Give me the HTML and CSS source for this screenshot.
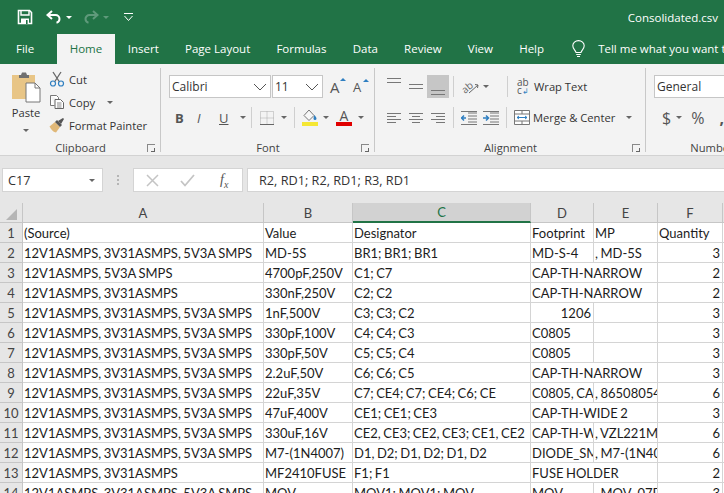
FILE: index.html

```html
<!DOCTYPE html>
<html lang="en">
<head>
    <meta charset="UTF-8">
    <meta name="viewport" content="width=device-width, initial-scale=1.0">
    <title>Consolidated.csv</title>
    <link rel="stylesheet" href="styles.css">
</head>
<body>
    <header class="titlebar">
        <div class="qat">
            <svg class="qat-save" width="16" height="16" viewBox="0 0 16 16"><path d="M1.5 1.5h11l2 2v11h-13z" fill="none" stroke="#fff" stroke-width="1.6"/><path d="M4 2v4h8V2" fill="none" stroke="#fff" stroke-width="1.4"/><path d="M4 9.5h8V15H4z" fill="#fff"/><path d="M9 11h1.6v4H9z" fill="#217346"/></svg>
            <svg class="qat-undo" width="16" height="14" viewBox="0 0 16 14"><path d="M6 1 1.5 5 6 9M2 5h7.5a4 4 0 0 1 4 4 4 4 0 0 1-3 3.7" fill="none" stroke="#fff" stroke-width="2"/></svg>
            <span class="arrow white"></span>
            <svg class="qat-redo" width="16" height="14" viewBox="0 0 16 14"><path d="M10 1l4.5 4L10 9M14 5H6.5a4 4 0 0 0-4 4 4 4 0 0 0 3 3.7" fill="none" stroke="#5f9a7b" stroke-width="2"/></svg>
            <span class="arrow dim"></span>
            <svg class="qat-more" width="9" height="8" viewBox="0 0 9 8"><path d="M0 .5h9" stroke="#fff"/><path d="M.5 3l4 4.5 4-4.5" fill="none" stroke="#fff"/></svg>
        </div>
        <div class="doc-title">Consolidated.csv</div>
    </header>

    <nav class="tabs">
        <a class="tab file">File</a>
        <a class="tab active">Home</a>
        <a class="tab">Insert</a>
        <a class="tab">Page Layout</a>
        <a class="tab">Formulas</a>
        <a class="tab">Data</a>
        <a class="tab">Review</a>
        <a class="tab">View</a>
        <a class="tab">Help</a>
        <svg class="bulb" width="13" height="18" viewBox="0 0 13 18"><path d="M4 12.5C3.5 10 .8 9 .8 5.8a5.7 5.2 0 0 1 11.4 0C12.2 9 9.5 10 9 12.5z" fill="none" stroke="#fff" stroke-width="1.1"/><path d="M4.2 14.5h4.6M5 16.5h3" stroke="#fff" stroke-width="1.1"/></svg>
        <span class="tell">Tell me what you want to do</span>
    </nav>

    <section class="ribbon">
        <div class="group clipboard">
            <div class="group-body clip-body">
                <div class="paste">
                    <svg width="30" height="31" viewBox="0 0 30 31">
                        <path d="M1 3h23v24H1z" fill="#e8c586"/>
                        <path d="M8 3h2l1-2.5h4L16 3h2v3H8z" fill="#6f6f6f"/>
                        <path d="M15 11h9l5 5v14H15z" fill="#fff" stroke="#777"/>
                        <path d="M24 11v5h5" fill="none" stroke="#777"/>
                    </svg>
                    <span class="paste-label">Paste</span>
                    <span class="arrow"></span>
                </div>
                <div class="clip-actions">
                    <div class="clip-row">
                        <svg width="16" height="16" viewBox="0 0 16 16"><path d="M4 1l6.5 10M12 1 5.500 11" stroke="#666" stroke-width="1.3" fill="none"/><circle cx="4" cy="12.5" r="2.5" fill="none" stroke="#2f7fc1" stroke-width="1.2"/><circle cx="12" cy="12.5" r="2.5" fill="none" stroke="#2f7fc1" stroke-width="1.2"/></svg>
                        <span>Cut</span>
                    </div>
                    <div class="clip-row">
                        <svg width="16" height="16" viewBox="0 0 16 16"><path d="M1.5 1.5h6l2 2v2M1.5 1.5v10h4" fill="#fff" stroke="#777"/><path d="M6 5.5h5.5l3 3v6H6z" fill="#fff" stroke="#666"/><path d="M8 9h4.5M8 11h4.5M8 13h4.5" stroke="#888"/></svg>
                        <span>Copy</span>
                        <span class="arrow copy-arrow"></span>
                    </div>
                    <div class="clip-row">
                        <svg width="16" height="16" viewBox="0 0 16 16"><path d="M.5 9.5 6 5l5 5-4 5.5c-2 0-5-3-6.500-6z" fill="#e0b878"/><path d="M6 5l2-2 5 5-2 2z" fill="#555"/><path d="M9 4l5-3 1 1-3 5z" fill="#555"/></svg>
                        <span>Format Painter</span>
                    </div>
                </div>
            </div>
            <div class="group-label">Clipboard<i class="launcher"></i></div>
        </div>

        <div class="group font">
            <div class="group-body stack">
                <div class="tool-row font-top">
                    <div class="combo font-name"><span>Calibri</span><svg width="14" height="8" viewBox="0 0 14 8"><path d="M1 1l6 6 6-6" fill="none" stroke="#555"/></svg></div>
                    <div class="combo font-size"><span>11</span><svg width="14" height="8" viewBox="0 0 14 8"><path d="M1 1l6 6 6-6" fill="none" stroke="#555"/></svg></div>
                    <span class="grow-a">A<i></i></span>
                    <span class="grow-a small">A<i></i></span>
                </div>
                <div class="tool-row font-bottom">
                    <b class="fmt">B</b>
                    <i class="fmt">I</i>
                    <u class="fmt">U</u>
                    <span class="arrow u-arrow"></span>
                    <span class="sep u-sep"></span>
                    <svg width="14" height="14" viewBox="0 0 14 14"><path d="M.5.5h13v13H.5z" fill="none" stroke="#aaa" stroke-dasharray="1 1"/><path d="M7 .5v13M.5 7h13" stroke="#aaa" stroke-dasharray="1 1"/><path d="M0 13.5h14" stroke="#666"/></svg>
                    <span class="arrow border-arrow"></span>
                    <span class="sep border-sep"></span>
                    <svg width="16" height="17" viewBox="0 0 16 17"><path d="M7 1 2 6.5l5 5 5-5z" fill="#f7f7f7" stroke="#777"/><path d="M12.5 6c1 1.5 2 2.5 2 3.5a1 1 0 0 1-3 0c0-1 .5-2 1-3.500z" fill="#2f7fc1"/><path d="M0 13h16v4H0z" fill="#f5e733"/></svg>
                    <span class="arrow fill-arrow"></span>
                    <span class="color-a">A</span>
                    <span class="arrow color-arrow"></span>
                </div>
            </div>
            <div class="group-label">Font<i class="launcher"></i></div>
        </div>

        <div class="group alignment">
            <div class="group-body stack">
                <div class="tool-row align-top">
                    <span class="lines top"><i></i><i></i></span>
                    <span class="lines mid"><i></i><i></i></span>
                    <span class="lines bot on"><i></i><i></i></span>
                    <span class="sep align-sep"></span>
                    <svg width="19" height="16" viewBox="0 0 19 16"><text x="0" y="12" transform="rotate(-40 6 8)" class="orient-text">ab</text><path d="M8 14 17 6M14 5.500l3 .5-.5 3" fill="none" stroke="#666"/></svg>
                    <span class="arrow orient-arrow"></span>
                    <span class="sep wrap-sep"></span>
                    <span class="ab"><span>ab</span><span>c<em>&#8626;</em></span></span>
                    <span class="btn-text">Wrap Text</span>
                </div>
                <div class="tool-row align-bottom">
                    <span class="para left"><i></i><i></i><i></i><i></i></span>
                    <span class="para center"><i></i><i></i><i></i><i></i></span>
                    <span class="para right"><i></i><i></i><i></i><i></i></span>
                    <span class="sep align-sep"></span>
                    <svg width="16" height="14" viewBox="0 0 16 14"><path d="M7 2h9M7 5h9M7 8h9M7 11h9M0 13.5h16M0 .5h16" stroke="#777"/><path d="M0 7h5M3 4.5 .5 7 3 9.5" fill="none" stroke="#2f7fc1" stroke-width="1.5"/></svg>
                    <svg class="indent-more" width="16" height="14" viewBox="0 0 16 14"><path d="M7 2h9M7 5h9M7 8h9M7 11h9M0 13.5h16M0 .5h16" stroke="#777"/><path d="M0 7h5M3 4.5 5.5 7 3 9.5" fill="none" stroke="#2f7fc1" stroke-width="1.5"/></svg>
                    <span class="sep merge-sep"></span>
                    <svg width="16" height="15" viewBox="0 0 16 15"><path d="M.5.5h15v14H.5zM.5 4h15M.5 11h15M8 .5V4M8 11v3.5" fill="#fff" stroke="#777"/><path d="M3 7.5h10M5 6 3 7.5 5 9M11 6l2 1.5L11 9" fill="none" stroke="#2f7fc1"/></svg>
                    <span class="btn-text merge-text">Merge &amp; Center</span>
                    <span class="arrow merge-arrow"></span>
                </div>
            </div>
            <div class="group-label">Alignment<i class="launcher"></i></div>
        </div>

        <div class="group number">
            <div class="group-body stack">
                <div class="tool-row"><div class="combo number-format"><span>General</span></div></div>
                <div class="tool-row number-row">
                    <span class="num-sym">$</span>
                    <span class="arrow"></span>
                    <span class="num-sym pct">%</span>
                    <span class="num-sym comma">,</span>
                </div>
            </div>
            <div class="group-label">Number</div>
        </div>
    </section>

    <section class="formula-bar">
        <div class="name-box"><span>C17</span><span class="arrow"></span></div>
        <div class="dots"><i></i><i></i><i></i></div>
        <div class="fx-box">
            <svg width="13" height="13" viewBox="0 0 13 13"><path d="M1 1l11 11M12 1 1 12" stroke="#c4c4c4" stroke-width="1.5"/></svg>
            <svg width="15" height="13" viewBox="0 0 15 13"><path d="M1 7l4 4.5L14 1" fill="none" stroke="#c4c4c4" stroke-width="1.8"/></svg>
            <span class="fx">f<sub>x</sub></span>
        </div>
        <div class="formula-input">R2, RD1; R2, RD1; R3, RD1</div>
    </section>

    <main class="sheet">
        <table class="grid">
            <colgroup>
                <col class="c-head"><col class="c-a"><col class="c-b"><col class="c-c"><col class="c-d"><col class="c-e"><col class="c-f"><col class="c-g">
            </colgroup>
            <thead>
                <tr><th class="corner"><i></i></th><th>A</th><th>B</th><th class="current">C</th><th>D</th><th>E</th><th>F</th><th></th></tr>
            </thead>
            <tbody>
                <tr><th>1</th><td>(Source)</td><td>Value</td><td>Designator</td><td>Footprint</td><td>MP</td><td>Quantity</td><td></td></tr>
                <tr><th>2</th><td>12V1ASMPS, 3V31ASMPS, 5V3A SMPS</td><td>MD-5S</td><td>BR1; BR1; BR1</td><td>MD-S-4</td><td>, MD-5S</td><td class="n">3</td><td></td></tr>
                <tr><th>3</th><td>12V1ASMPS, 5V3A SMPS</td><td>4700pF,250V</td><td>C1; C7</td><td class="spill">CAP-TH-NARROW</td><td></td><td class="n">2</td><td></td></tr>
                <tr><th>4</th><td>12V1ASMPS, 3V31ASMPS</td><td>330nF,250V</td><td>C2; C2</td><td class="spill">CAP-TH-NARROW</td><td></td><td class="n">2</td><td></td></tr>
                <tr><th>5</th><td>12V1ASMPS, 3V31ASMPS, 5V3A SMPS</td><td>1nF,500V</td><td>C3; C3; C2</td><td class="n">1206</td><td></td><td class="n">3</td><td></td></tr>
                <tr><th>6</th><td>12V1ASMPS, 3V31ASMPS, 5V3A SMPS</td><td>330pF,100V</td><td>C4; C4; C3</td><td>C0805</td><td></td><td class="n">3</td><td></td></tr>
                <tr><th>7</th><td>12V1ASMPS, 3V31ASMPS, 5V3A SMPS</td><td>330pF,50V</td><td>C5; C5; C4</td><td>C0805</td><td></td><td class="n">3</td><td></td></tr>
                <tr><th>8</th><td>12V1ASMPS, 3V31ASMPS, 5V3A SMPS</td><td>2.2uF,50V</td><td>C6; C6; C5</td><td class="spill">CAP-TH-NARROW</td><td></td><td class="n">3</td><td></td></tr>
                <tr><th>9</th><td>12V1ASMPS, 3V31ASMPS, 5V3A SMPS</td><td>22uF,35V</td><td>C7; CE4; C7; CE4; C6; CE</td><td class="cut">C0805, CAP-TH</td><td class="cut">, 865080545012</td><td class="n">6</td><td></td></tr>
                <tr><th>10</th><td>12V1ASMPS, 3V31ASMPS, 5V3A SMPS</td><td>47uF,400V</td><td>CE1; CE1; CE3</td><td class="spill">CAP-TH-WIDE 2</td><td></td><td class="n">3</td><td></td></tr>
                <tr><th>11</th><td>12V1ASMPS, 3V31ASMPS, 5V3A SMPS</td><td>330uF,16V</td><td>CE2, CE3; CE2, CE3; CE1, CE2</td><td class="cut">CAP-TH-WIDE</td><td class="cut">, VZL221M1CTR</td><td class="n">6</td><td></td></tr>
                <tr><th>12</th><td>12V1ASMPS, 3V31ASMPS, 5V3A SMPS</td><td>M7-(1N4007)</td><td>D1, D2; D1, D2; D1, D2</td><td class="cut">DIODE_SMA</td><td class="cut">, M7-(1N4007)</td><td class="n">6</td><td></td></tr>
                <tr><th>13</th><td>12V1ASMPS, 3V31ASMPS</td><td>MF2410FUSE</td><td>F1; F1</td><td class="spill">FUSE HOLDER</td><td></td><td class="n">2</td><td></td></tr>
                <tr><th>14</th><td>12V1ASMPS, 3V31ASMPS, 5V3A SMPS</td><td>MOV</td><td>MOV1; MOV1; MOV</td><td>MOV</td><td class="cut">, MOV_07D471K</td><td class="n">3</td><td></td></tr>
            </tbody>
        </table>
    </main>
</body>
</html>
```

FILE: styles.css

```css
html, body {
    margin: 0;
    height: 493px;
    overflow: hidden;
}
body {
    width: 724px;
    background-color: #e6e6e6;
    font-family: "Open Sans", sans-serif;
    color: #333;
}
svg {
    display: block;
    flex: none;
}

/* small dropdown triangle used all over the ribbon */
.arrow {
    flex: none;
    width: 0;
    height: 0;
    border-left: 3px solid transparent;
    border-right: 3px solid transparent;
    border-top: 3px solid #666;
}
.arrow.white { border-top-color: #fff; }
.arrow.dim { border-top-color: #5f9a7b; }

/* title bar */
.titlebar {
    height: 34px;
    background-color: #217346;
    display: flex;
    align-items: center;
    justify-content: space-between;
    padding: 0 6px 0 17px;
}
.qat {
    display: flex;
    align-items: center;
}
.qat-undo { margin-left: 13px; }
.qat .arrow { margin-left: 4px; }
.qat-redo { margin-left: 11px; }
.qat-more { margin-left: 15px; }
.doc-title {
    color: #fff;
    font-size: 11.5px;
}

/* tabs */
.tabs {
    height: 30px;
    background-color: #217346;
    display: flex;
    align-items: stretch;
    color: #fff;
    font-size: 11.5px;
    white-space: nowrap;
    overflow: hidden;
}
.tab {
    display: flex;
    align-items: center;
    padding: 0 13.1px 2px;
}
.tab.file { padding: 0 23px 2px 16px; }
.tab.active {
    background-color: #f3f3f3;
    color: #217346;
    padding: 0 12.5px 2px;
}
.bulb {
    align-self: center;
    margin-left: 15px;
}
.tell {
    align-self: center;
    margin: 0 0 2px 13px;
}

/* ribbon */
.ribbon {
    height: 92px;
    box-sizing: border-box;
    background-color: #f3f3f3;
    border-bottom: 1px solid #d2d2d2;
    display: flex;
    font-size: 11.2px;
    overflow: hidden;
}
.group {
    flex: none;
    box-sizing: border-box;
    padding-top: 4px;
    display: flex;
    flex-direction: column;
    position: relative;
}
.group::after {
    content: "";
    position: absolute;
    top: 4px;
    bottom: 3px;
    right: 0;
    width: 1px;
    background-color: #c8c8c8;
}
.group-body {
    flex: 1;
    min-height: 0;
}
.group-label {
    height: 16px;
    line-height: 17px;
    text-align: center;
    position: relative;
    color: #444;
}
.launcher {
    position: absolute;
    right: 6px;
    top: 5px;
    width: 7px;
    height: 7px;
    border-left: 1px solid #888;
    border-top: 1px solid #888;
}
.launcher::after {
    content: "";
    position: absolute;
    right: 0;
    bottom: 0;
    width: 3px;
    height: 3px;
    border-right: 1px solid #666;
    border-bottom: 1px solid #666;
}
.clipboard { width: 161px; }
.font { width: 214px; }
.alignment { width: 271px; }
.number { width: 132px; }
.number::after { display: none; }

/* clipboard */
.clip-body {
    display: flex;
    padding-left: 11px;
}
.paste {
    width: 30px;
    display: flex;
    flex-direction: column;
    align-items: center;
    padding-top: 4px;
}
.paste-label {
    height: 19px;
    line-height: 19px;
}
.paste .arrow { margin-top: 7px; }
.clip-actions {
    margin-left: 8px;
    display: flex;
    flex-direction: column;
    gap: 5px;
    padding-top: 2px;
}
.clip-row {
    height: 18px;
    display: flex;
    align-items: center;
    gap: 4px;
    white-space: nowrap;
}
.copy-arrow { margin-left: 8px; }

/* rows of tools in font, alignment and number groups */
.stack {
    display: flex;
    flex-direction: column;
    padding-top: 7px;
}
.tool-row {
    height: 23px;
    display: flex;
    align-items: center;
}
.tool-row + .tool-row {
    margin-top: 7px;
    height: 25px;
}
.font-top { padding-left: 8px; }
.font-bottom { padding-left: 14px; }
.combo {
    box-sizing: border-box;
    height: 23px;
    background-color: #fff;
    border: 1px solid #c6c6c6;
    display: flex;
    align-items: center;
    justify-content: space-between;
    padding: 0 3px 0 2px;
    font-size: 12px;
}
.font-name { width: 102px; }
.font-size {
    width: 51px;
    margin-left: 1px;
}
.grow-a {
    position: relative;
    margin-left: 7px;
    font-size: 15px;
    color: #555;
    width: 16px;
}
.grow-a.small {
    margin-left: 7px;
    font-size: 13px;
}
.grow-a i {
    position: absolute;
    top: 1px;
    right: 0;
    border-left: 3px solid transparent;
    border-right: 3px solid transparent;
    border-bottom: 3px solid #2f7fc1;
}
.fmt {
    width: 22px;
    font-size: 13px;
    color: #555;
    flex: none;
}
.sep {
    flex: none;
    width: 1px;
    height: 21px;
    background-color: #cfcfcf;
}
.u-arrow { margin-left: -1px; }
.u-sep { margin: 0 8px 0 5px; }
.border-arrow { margin-left: 7px; }
.border-sep { margin: 0 7px; }
.fill-arrow { margin-left: 5px; }
.color-a {
    margin-left: 7px;
    width: 16px;
    height: 17px;
    line-height: 14px;
    text-align: center;
    font-size: 14px;
    color: #555;
    border-bottom: 4px solid #e00000;
    box-sizing: border-box;
}
.color-arrow { margin-left: 6px; }

/* alignment */
.align-top, .align-bottom { padding-left: 8px; }
.lines, .para {
    flex: none;
    width: 22px;
    height: 23px;
    box-sizing: border-box;
    display: flex;
    flex-direction: column;
    gap: 3px;
    padding: 0 4px;
}
.lines i, .para i {
    display: block;
    height: 1px;
    background-color: #777;
}
.lines.top { justify-content: flex-start; padding-top: 3px; }
.lines.mid { justify-content: center; }
.lines.bot { justify-content: flex-end; padding-bottom: 3px; }
.lines.on { background-color: #c6c6c6; }
.para {
    justify-content: center;
    gap: 2px;
}
.para.left i:nth-child(even) { width: 9px; }
.para.center i:nth-child(even) { width: 8px; margin-left: 3px; }
.para.right i:nth-child(even) { width: 9px; margin-left: 5px; }
.align-sep { margin: 0 7px 0 4px; }
.orient-text {
    font-size: 10px;
    fill: #666;
    font-family: "Open Sans", sans-serif;
}
.orient-arrow { margin-left: 3px; }
.wrap-sep { margin: 0 9px 0 18px; }
.ab {
    display: flex;
    flex-direction: column;
    font-size: 10px;
    line-height: 8px;
    color: #555;
    width: 16px;
}
.ab em {
    font-style: normal;
    font-size: 8px;
    color: #2f7fc1;
}
.btn-text {
    margin-left: 1px;
    white-space: nowrap;
}
.merge-text { margin-left: 3px; }
.indent-more { margin-left: 6px; }
.merge-sep { margin: 0 7px; }
.merge-arrow { margin-left: 11px; }

/* number */
.number-format {
    width: 90px;
    margin-left: 8px;
    flex: none;
}
.number-row { padding-left: 16px; }
.num-sym {
    font-size: 16px;
    color: #555;
}
.number-row .arrow { margin-left: 5px; }
.pct { margin-left: 9px; }
.comma { margin-left: 15px; font-weight: bold; }

/* formula bar */
.formula-bar {
    height: 47px;
    box-sizing: border-box;
    padding: 12px 0 11px 2px;
    display: flex;
    align-items: stretch;
    font-size: 12.7px;
    background-color: #e6e6e6;
}
.name-box, .fx-box, .formula-input {
    box-sizing: border-box;
    background-color: #fff;
    border: 1px solid #d4d4d4;
    display: flex;
    align-items: center;
}
.name-box {
    width: 101px;
    padding: 0 7px 0 5px;
    justify-content: space-between;
}
.dots {
    width: 30px;
    display: flex;
    flex-direction: column;
    align-items: center;
    justify-content: center;
    gap: 2px;
}
.dots i {
    width: 2px;
    height: 2px;
    background-color: #b5b5b5;
}
.fx-box {
    width: 110px;
    padding: 0 12px 0 12px;
    gap: 21px;
}
.fx {
    margin-left: 4px;
    font-family: "Liberation Serif", serif;
    font-style: italic;
    font-size: 14px;
    color: #555;
}
.fx sub { font-size: 10px; line-height: 0; }
.formula-input {
    flex: 1;
    margin-left: 4px;
    padding-left: 11px;
    border-right: 0;
}

/* sheet */
.sheet {
    height: 290px;
    overflow: hidden;
    background-color: #fff;
}
.grid {
    width: 783px;
    table-layout: fixed;
    border-collapse: separate;
    border-spacing: 0;
    font-family: Lato, sans-serif;
    font-size: 13px;
    word-spacing: -0.8px;
    color: #1c1c1c;
}
.c-head { width: 23px; }
.c-a { width: 241px; }
.c-b { width: 89px; }
.c-c { width: 178px; }
.c-d { width: 63px; }
.c-e { width: 64px; }
.c-f { width: 65px; }
.c-g { width: 60px; }
.grid tr {
    height: 20px;
}
.grid th, .grid td {
    box-sizing: border-box;
    height: 20px;
    padding: 0 2px 0 1px;
    border-right: 1px solid #d4d4d4;
    border-bottom: 1px solid #d4d4d4;
    white-space: nowrap;
    font-weight: normal;
    vertical-align: bottom;
    line-height: 18px;
}
.grid th {
    background-color: #e6e6e6;
    color: #444;
    text-align: center;
    border-color: #c6c6c6;
    padding: 0;
}
.grid thead th {
    height: 19px;
}
.grid thead tr { height: 19px; }
.grid .current {
    background-color: #d2d2d2;
    color: #217346;
    border-bottom: 2px solid #217346;
}
.corner {
    position: relative;
}
.corner i {
    position: absolute;
    right: 5px;
    bottom: 2px;
    border-left: 11px solid transparent;
    border-bottom: 11px solid #b5b5b5;
}
.grid .n { text-align: right; }
.grid .spill { border-right: 0; }
.grid .cut { overflow: hidden; }
```
